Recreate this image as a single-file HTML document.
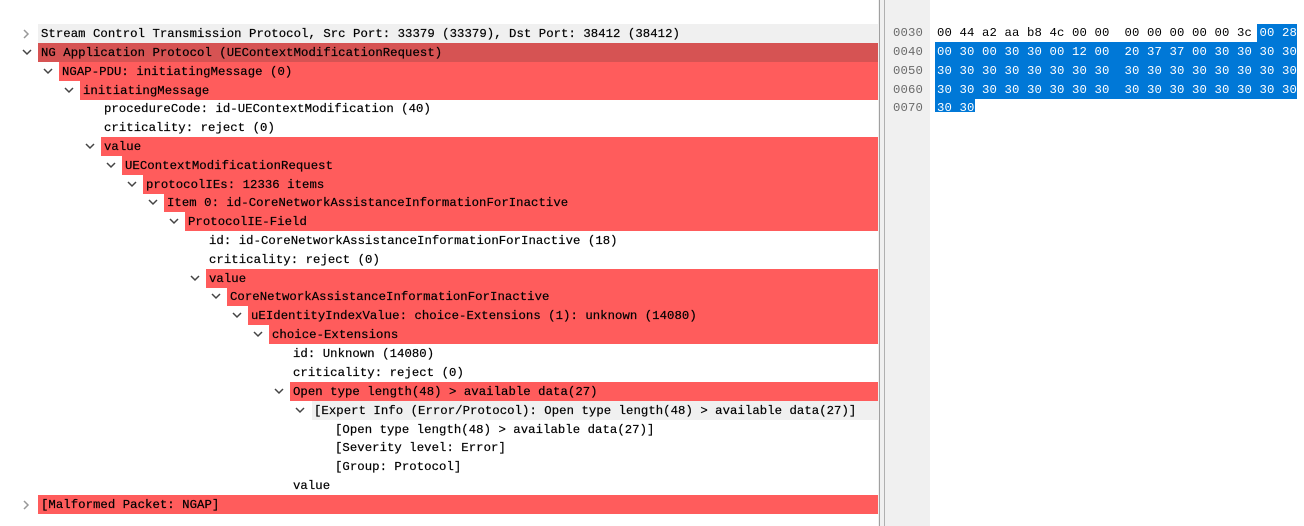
<!DOCTYPE html>
<html><head><meta charset="utf-8"><style>
body{margin:0;width:1304px;height:526px;background:#fff;position:relative;overflow:hidden;font-family:"Liberation Mono",monospace;font-size:12.3px;color:#000}
.r{position:absolute;height:19px;line-height:20px;white-space:pre;letter-spacing:0.05px;-webkit-text-stroke:0.2px #000}
.bg{position:absolute;height:19px;right:426px}
.red{background:#ff5c5c}
.dred{background:#d65353}
.gry{background:#f0f0f0}
.ch{position:absolute;width:10px;height:10px}
#strip{position:absolute;left:878px;top:0;width:52px;height:526px;background:#f0f0f0}
.vl{position:absolute;top:0;height:526px;width:1px;background:#a0a0a0}
.hx{position:absolute;white-space:pre;height:19px;line-height:20px;letter-spacing:0.12px}
.off{color:#6a6a6a}
.sel{background:#0078d7;color:#fff;position:absolute;height:18px}
</style></head><body>
<div id="strip"></div><div class="vl" style="left:879px"></div><div class="vl" style="left:884px;background:#b0b0b0"></div>

<!-- hex -->
<div class="sel" style="left:1257px;top:24px;width:40px"></div>
<div class="sel" style="left:935px;top:42px;width:362px;height:57px"></div>
<div class="sel" style="left:935px;top:99px;width:40px;height:13px"></div>
<div class="hx off" style="left:893px;top:23px">0030</div>
<div class="hx off" style="left:893px;top:42px">0040</div>
<div class="hx off" style="left:893px;top:61px">0050</div>
<div class="hx off" style="left:893px;top:80px">0060</div>
<div class="hx off" style="left:893px;top:98px">0070</div>
<div class="hx" style="left:937px;top:23px">00 44 a2 aa b8 4c 00 00  00 00 00 00 00 3c <span style="color:#fff">00 28</span></div>
<div class="hx" style="left:937px;top:42px;color:#fff">00 30 00 30 30 00 12 00  20 37 37 00 30 30 30 30</div>
<div class="hx" style="left:937px;top:61px;color:#fff">30 30 30 30 30 30 30 30  30 30 30 30 30 30 30 30</div>
<div class="hx" style="left:937px;top:80px;color:#fff">30 30 30 30 30 30 30 30  30 30 30 30 30 30 30 30</div>
<div class="hx" style="left:937px;top:98px;color:#fff">30 30</div>

<!-- tree rows -->
<div class="bg gry" style="left:38px;top:24px"></div>
<svg class="ch" style="left:21px;top:29px" viewBox="0 0 10 10"><polyline points="3,1 7,5 3,9" fill="none" stroke="#999" stroke-width="1.5"/></svg>
<div class="r" style="left:41px;top:24px">Stream Control Transmission Protocol, Src Port: 33379 (33379), Dst Port: 38412 (38412)</div>

<div class="bg dred" style="left:38px;top:43px"></div>
<svg class="ch" style="left:22px;top:47px" viewBox="0 0 10 10"><polyline points="1,3 5,7 9,3" fill="none" stroke="#444" stroke-width="1.5"/></svg>
<div class="r" style="left:41px;top:43px">NG Application Protocol (UEContextModificationRequest)</div>

<div class="bg red" style="left:59px;top:62px"></div>
<svg class="ch" style="left:43px;top:66px" viewBox="0 0 10 10"><polyline points="1,3 5,7 9,3" fill="none" stroke="#444" stroke-width="1.5"/></svg>
<div class="r" style="left:62px;top:62px">NGAP-PDU: initiatingMessage (0)</div>

<div class="bg red" style="left:80px;top:81px"></div>
<svg class="ch" style="left:64px;top:85px" viewBox="0 0 10 10"><polyline points="1,3 5,7 9,3" fill="none" stroke="#444" stroke-width="1.5"/></svg>
<div class="r" style="left:83px;top:81px">initiatingMessage</div>

<div class="r" style="left:104px;top:99px">procedureCode: id-UEContextModification (40)</div>
<div class="r" style="left:104px;top:118px">criticality: reject (0)</div>

<div class="bg red" style="left:101px;top:137px"></div>
<svg class="ch" style="left:85px;top:141px" viewBox="0 0 10 10"><polyline points="1,3 5,7 9,3" fill="none" stroke="#444" stroke-width="1.5"/></svg>
<div class="r" style="left:104px;top:137px">value</div>

<div class="bg red" style="left:122px;top:156px"></div>
<svg class="ch" style="left:106px;top:160px" viewBox="0 0 10 10"><polyline points="1,3 5,7 9,3" fill="none" stroke="#444" stroke-width="1.5"/></svg>
<div class="r" style="left:125px;top:156px">UEContextModificationRequest</div>

<div class="bg red" style="left:143px;top:175px"></div>
<svg class="ch" style="left:127px;top:179px" viewBox="0 0 10 10"><polyline points="1,3 5,7 9,3" fill="none" stroke="#444" stroke-width="1.5"/></svg>
<div class="r" style="left:146px;top:175px">protocolIEs: 12336 items</div>

<div class="bg red" style="left:164px;top:193px"></div>
<svg class="ch" style="left:148px;top:197px" viewBox="0 0 10 10"><polyline points="1,3 5,7 9,3" fill="none" stroke="#444" stroke-width="1.5"/></svg>
<div class="r" style="left:167px;top:193px">Item 0: id-CoreNetworkAssistanceInformationForInactive</div>

<div class="bg red" style="left:185px;top:212px"></div>
<svg class="ch" style="left:169px;top:216px" viewBox="0 0 10 10"><polyline points="1,3 5,7 9,3" fill="none" stroke="#444" stroke-width="1.5"/></svg>
<div class="r" style="left:188px;top:212px">ProtocolIE-Field</div>

<div class="r" style="left:209px;top:231px">id: id-CoreNetworkAssistanceInformationForInactive (18)</div>
<div class="r" style="left:209px;top:250px">criticality: reject (0)</div>

<div class="bg red" style="left:206px;top:269px"></div>
<svg class="ch" style="left:190px;top:273px" viewBox="0 0 10 10"><polyline points="1,3 5,7 9,3" fill="none" stroke="#444" stroke-width="1.5"/></svg>
<div class="r" style="left:209px;top:269px">value</div>

<div class="bg red" style="left:227px;top:287px"></div>
<svg class="ch" style="left:211px;top:291px" viewBox="0 0 10 10"><polyline points="1,3 5,7 9,3" fill="none" stroke="#444" stroke-width="1.5"/></svg>
<div class="r" style="left:230px;top:287px">CoreNetworkAssistanceInformationForInactive</div>

<div class="bg red" style="left:248px;top:306px"></div>
<svg class="ch" style="left:232px;top:310px" viewBox="0 0 10 10"><polyline points="1,3 5,7 9,3" fill="none" stroke="#444" stroke-width="1.5"/></svg>
<div class="r" style="left:251px;top:306px">uEIdentityIndexValue: choice-Extensions (1): unknown (14080)</div>

<div class="bg red" style="left:269px;top:325px"></div>
<svg class="ch" style="left:253px;top:329px" viewBox="0 0 10 10"><polyline points="1,3 5,7 9,3" fill="none" stroke="#444" stroke-width="1.5"/></svg>
<div class="r" style="left:272px;top:325px">choice-Extensions</div>

<div class="r" style="left:293px;top:344px">id: Unknown (14080)</div>
<div class="r" style="left:293px;top:363px">criticality: reject (0)</div>

<div class="bg red" style="left:290px;top:382px"></div>
<svg class="ch" style="left:274px;top:386px" viewBox="0 0 10 10"><polyline points="1,3 5,7 9,3" fill="none" stroke="#444" stroke-width="1.5"/></svg>
<div class="r" style="left:293px;top:382px">Open type length(48) &gt; available data(27)</div>

<div class="bg gry" style="left:312px;top:401px"></div>
<svg class="ch" style="left:295px;top:405px" viewBox="0 0 10 10"><polyline points="1,3 5,7 9,3" fill="none" stroke="#444" stroke-width="1.5"/></svg>
<div class="r" style="left:314px;top:401px">[Expert Info (Error/Protocol): Open type length(48) &gt; available data(27)]</div>

<div class="r" style="left:335px;top:420px">[Open type length(48) &gt; available data(27)]</div>
<div class="r" style="left:335px;top:438px">[Severity level: Error]</div>
<div class="r" style="left:335px;top:457px">[Group: Protocol]</div>
<div class="r" style="left:293px;top:476px">value</div>

<div class="bg red" style="left:38px;top:495px"></div>
<svg class="ch" style="left:21px;top:500px" viewBox="0 0 10 10"><polyline points="3,1 7,5 3,9" fill="none" stroke="#999" stroke-width="1.5"/></svg>
<div class="r" style="left:41px;top:495px">[Malformed Packet: NGAP]</div>
</body></html>
